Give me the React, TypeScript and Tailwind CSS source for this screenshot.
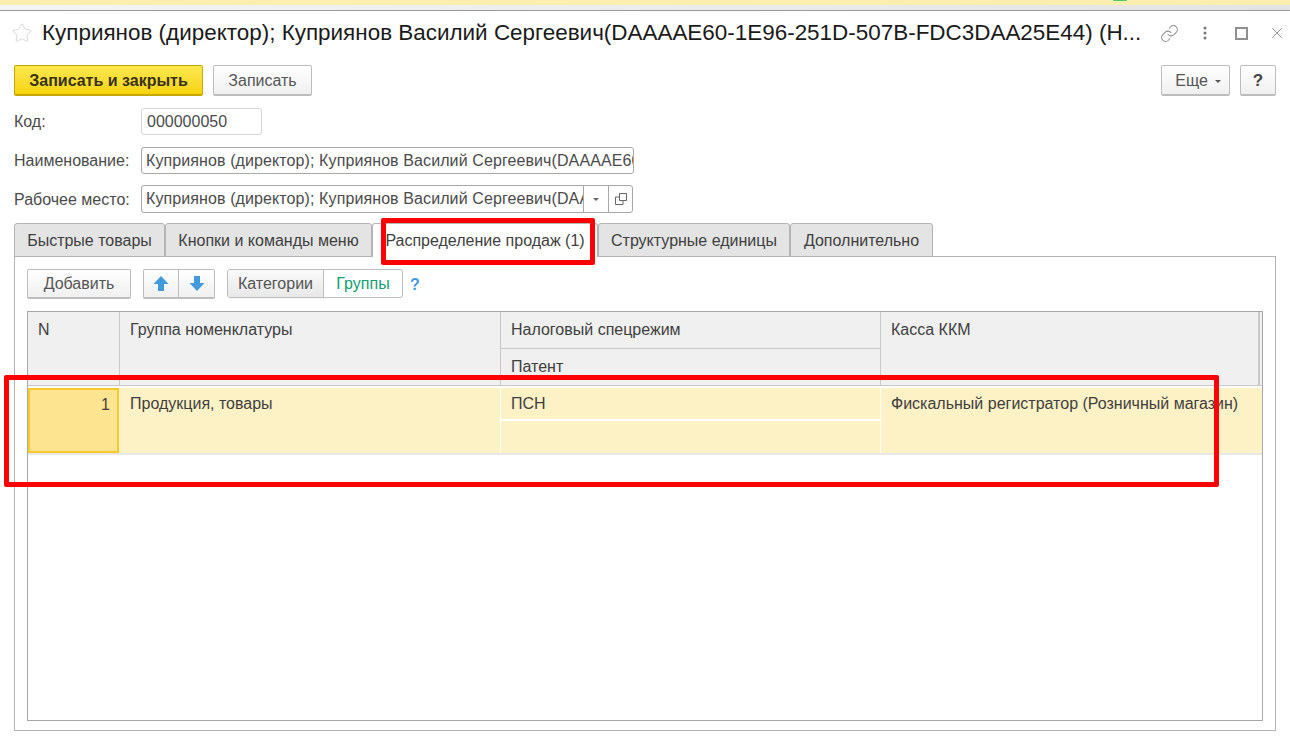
import { Link, Star, X } from 'lucide-react'

const font = { fontFamily: '"Liberation Sans", Arial, sans-serif' }

const tabs = [
  { label: 'Быстрые товары', width: 'w-[151px]' },
  { label: 'Кнопки и команды меню', width: 'w-[207px]' },
  { label: 'Распределение продаж (1)', width: 'w-[226px]', active: true },
  { label: 'Структурные единицы', width: 'w-[192px]' },
  { label: 'Дополнительно', width: 'w-[143px]' },
]

function ArrowIcon({ down }: { down?: boolean }) {
  return (
    <svg width="16" height="17" viewBox="0 0 16 17" className={down ? 'rotate-180' : ''}>
      <path d="M8 1 15.5 9H11v7H5V9H.5z" fill="#3f9bdc" />
    </svg>
  )
}

function Field({ label, className, children }: { label: string; className: string; children: React.ReactNode }) {
  return (
    <div className={`flex items-center ${className}`}>
      <span className="w-[127px] pt-[1px] text-[16px] text-[#4b4b4b]">{label}</span>
      {children}
    </div>
  )
}

export default function App() {
  return (
    <div style={font} className="relative h-[743px] w-[1290px] overflow-hidden bg-white text-[16px] text-[#3f3f3f]">
      {/* Top strip of the host window */}
      <div className="relative h-[5px] bg-[#fbeeb0]">
        <div className="absolute left-[1113px] top-0 h-[1px] w-[14px] rounded-b-full bg-[#4fc76a]" />
      </div>
      <div className="h-[5px] bg-gradient-to-r from-[#f4f4f4] to-[#e4e4e4]" />
      <div className="h-[1px] bg-[#9a9a9a]" />

      {/* Title */}
      <div className="flex h-[44px] items-center pl-[11px]">
        <Star size={22} strokeWidth={1} className="text-[#d4d4d4]" />
        <div className="ml-[9px] w-[1101px] whitespace-nowrap text-[22.44px] leading-none text-[#1a1a1a]">
          Куприянов (директор); Куприянов Василий Сергеевич(DAAAAE60-1E96-251D-507B-FDC3DAA25E44) (Н...
        </div>
        <Link size={19} strokeWidth={1.3} className="ml-[17px] text-[#8f8f8f]" />
        <svg width="4" height="14" viewBox="0 0 4 14" className="ml-[24px] fill-[#777777]">
          <circle cx="2" cy="2" r="1.5" />
          <circle cx="2" cy="7" r="1.5" />
          <circle cx="2" cy="12" r="1.5" />
        </svg>
        <div className="ml-[28px] h-[13px] w-[13px] border-2 border-[#8f8f8f]" />
        <X size={18} strokeWidth={1.2} className="ml-[20px] text-[#8a8a8a]" />
      </div>

      {/* Command bar */}
      <div className="mt-[10px] flex h-[31px] pl-[14px] pr-[14px]">
        <button className="h-full w-[189px] rounded-[2px] border border-b-2 border-[#c5a900] bg-gradient-to-b from-[#ffe84d] to-[#f7d400] pt-[1px] text-[16px] font-bold text-[#37321a]">
          Записать и закрыть
        </button>
        <button className="ml-[10px] h-full w-[99px] rounded-[2px] border border-b-2 border-[#bdbdbd] bg-gradient-to-b from-white to-[#f0f0f0] pt-[1px] text-[16px] text-[#555555]">
          Записать
        </button>
        <button className="ml-auto flex h-full w-[69px] items-center justify-center gap-[7px] rounded-[2px] border border-b-2 border-[#bdbdbd] bg-gradient-to-b from-white to-[#f0f0f0] pl-[5px] pt-[1px] text-[16px] text-[#555555]">
          Еще
          <span className="mt-[2px] border-x-[3px] border-t-[3px] border-x-transparent border-t-[#555555]" />
        </button>
        <button className="ml-[10px] h-full w-[36px] rounded-[2px] border border-b-2 border-[#bdbdbd] bg-gradient-to-b from-white to-[#f0f0f0] pt-[1px] text-[17px] font-bold text-[#444444]">
          ?
        </button>
      </div>

      {/* Form */}
      <Field label="Код:" className="mt-[12px] pl-[14px]">
        <div className="flex h-[27px] w-[121px] items-center rounded-[3px] border border-[#d6d6d6] pl-[5px] text-[16px] text-[#4b4b4b]">
          000000050
        </div>
      </Field>
      <Field label="Наименование:" className="mt-[12px] pl-[14px]">
        <div className="flex h-[27px] w-[493px] items-center overflow-hidden whitespace-nowrap rounded-[3px] border border-[#a8a8a8] pl-[4px] text-[16px] tracking-[0.1px] text-[#4b4b4b]">
          Куприянов (директор); Куприянов Василий Сергеевич(DAAAAE60-1E96-251D-507B-FDC3DAA25E44)
        </div>
      </Field>
      <Field label="Рабочее место:" className="mt-[11px] pl-[14px]">
        <div className="flex h-[28px] w-[492px] items-center overflow-hidden rounded-[3px] border border-[#a8a8a8] text-[16px] text-[#4b4b4b]">
          <div className="w-[441px] shrink-0 overflow-hidden whitespace-nowrap pl-[4px] tracking-[0.1px]">
            Куприянов (директор); Куприянов Василий Сергеевич(DAAAAE60-1E96-251D-507B-FDC3DAA25E44)
          </div>
          <div className="flex h-full w-[25px] shrink-0 items-center justify-center border-l border-[#a8a8a8]">
            <span className="border-x-[3px] border-t-[3px] border-x-transparent border-t-[#666666]" />
          </div>
          <div className="flex h-full flex-1 items-center justify-center border-l border-[#a8a8a8]">
            <svg width="12" height="12" viewBox="0 0 12 12" fill="none" stroke="#666666">
              <path d="M4.5.5h7v7h-7zM4.5 4H.5v7.5H8V8" />
            </svg>
          </div>
        </div>
      </Field>

      {/* Tabs */}
      <div className="mt-[10px] flex h-[34px] pl-[14px]">
        {tabs.map((tab) => (
          <div
            key={tab.label}
            className={`${tab.width} flex items-center justify-center rounded-t-[3px] border border-[#b4b4b4] pt-[1px] text-[16px] ${
              tab.active ? 'border-b-0 bg-white' : 'bg-[#e4e4e4]'
            }`}
          >
            {tab.label}
          </div>
        ))}
      </div>

      {/* Tab panel */}
      <div className="mx-[14px] -mt-[1px] h-[475px] border border-[#b4b4b4] px-[12px] pt-[12px]">
        <div className="flex h-[29px] items-start">
          <button className="h-[30px] w-[104px] rounded-[2px] border border-b-2 border-[#bdbdbd] bg-gradient-to-b from-white to-[#f0f0f0] text-[16px] text-[#555555]">
            Добавить
          </button>
          <button className="ml-[12px] flex h-[30px] w-[36px] items-center justify-center rounded-l-[2px] border border-b-2 border-[#bdbdbd] bg-gradient-to-b from-white to-[#f0f0f0]">
            <ArrowIcon />
          </button>
          <button className="flex h-[30px] w-[36px] items-center justify-center rounded-r-[2px] border border-b-2 border-l-0 border-[#bdbdbd] bg-gradient-to-b from-white to-[#f0f0f0]">
            <ArrowIcon down />
          </button>
          <div className="ml-[12px] flex h-[29px] w-[176px] overflow-hidden rounded-[3px] border border-[#bdbdbd] text-[16px]">
            <div className="flex w-[96px] items-center justify-center border-r border-[#bdbdbd] bg-gradient-to-b from-[#fafafa] to-[#e8e8e8] text-[#555555]">
              Категории
            </div>
            <div className="flex flex-1 items-center justify-center text-[#10a070]">Группы</div>
          </div>
          <span className="ml-[7px] mt-[4px] text-[16px] font-bold text-[#3f9bdc]">?</span>
        </div>

        {/* Table */}
        <div className="mt-[13px] h-[410px] border border-[#a8a8a8] text-[16px]">
          <div className="flex h-[74px] border-b border-[#c8c8c8] bg-[#f0f0f0]">
            <div className="w-[92px] border-r border-[#c8c8c8] pl-[10px] pt-[6px]">N</div>
            <div className="w-[381px] border-r border-[#c8c8c8] pl-[10px] pt-[6px]">Группа номенклатуры</div>
            <div className="w-[380px] border-r border-[#c8c8c8]">
              <div className="h-[37px] border-b border-[#c8c8c8] pl-[10px] pt-[6px]">Налоговый спецрежим</div>
              <div className="pl-[10px] pt-[6px]">Патент</div>
            </div>
            <div className="w-[379px] border-r-2 border-[#c8c8c8] pl-[10px] pt-[6px]">Касса ККМ</div>
          </div>
          <div className="mt-[2px] flex h-[67px] border-b-2 border-[#e8e8e8] bg-[#fdf1c6]">
            <div className="w-[91px] border-2 border-[#f8c92d] bg-[#fde491] pr-[7px] pt-[3px] text-right">1</div>
            <div className="ml-[1px] w-[381px] border-r border-white pl-[10px] pt-[4px]">Продукция, товары</div>
            <div className="w-[380px] border-r border-white">
              <div className="h-[33px] border-b-2 border-white pl-[10px] pt-[4px]">ПСН</div>
            </div>
            <div className="flex-1 whitespace-nowrap pl-[10px] pt-[4px]">Фискальный регистратор (Розничный магазин)</div>
          </div>
        </div>
      </div>

      {/* Red annotation frames */}
      <div className="absolute left-[381px] top-[218px] h-[47px] w-[214px] rounded-[2px] border-[5px] border-[#ff0000]" />
      <div className="absolute left-[4px] top-[375px] h-[112px] w-[1215px] rounded-[2px] border-[5px] border-[#ff0000]" />
    </div>
  )
}
